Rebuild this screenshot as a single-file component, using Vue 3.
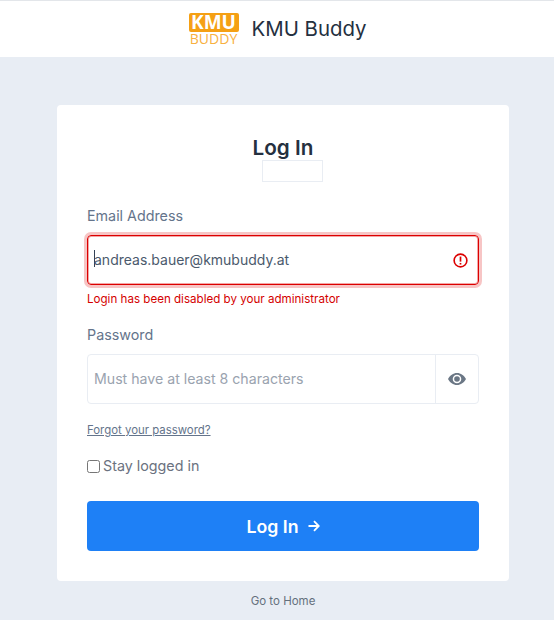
<script setup>
const title = 'KMU Buddy'
</script>

<template>
  <div class="page">
    <header class="top">
      <div class="logo">
        <span class="logo-kmu">KMU</span>
        <span class="logo-buddy">BUDDY</span>
      </div>
      <span class="brand">{{ title }}</span>
    </header>
    <main class="main">
      <section class="card">
        <h1 class="heading">Log In</h1>
        <div class="blank"></div>
        <label class="label first">Email Address</label>
        <div class="input error">
          <i class="caret"></i>
          <span class="value">andreas.bauer@kmubuddy.at</span>
          <svg class="alert" width="15" height="15" viewBox="0 0 16 16" fill="none">
            <circle cx="8" cy="8" r="6.800" stroke="#dc0000" stroke-width="1.700" />
            <path d="M8 3.800V9.200" stroke="#dc0000" stroke-width="1.800" />
            <path d="M8 10.600v1.700" stroke="#dc0000" stroke-width="1.800" />
          </svg>
        </div>
        <p class="msg">Login has been disabled by your administrator</p>
        <label class="label second">Password</label>
        <div class="input group">
          <span class="placeholder">Must have at least 8 characters</span>
          <span class="eye-box">
            <svg width="18" height="12" viewBox="0 0 18 12">
              <path fill="#6b7785" fill-rule="evenodd" d="M9 0C5.200 0 1.900 2.400 0 6c1.900 3.600 5.200 6 9 6s7.100-2.400 9-6c-1.900-3.600-5.200-6-9-6zM9 10.300a4.300 4.300 0 1 1 0-8.600 4.300 4.300 0 0 1 0 8.600z" />
              <circle cx="9" cy="6" r="2.800" fill="#6b7785" />
            </svg>
          </span>
        </div>
        <a class="forgot">Forgot your password?</a>
        <label class="stay">
          <input type="checkbox" class="check" />
          <span>Stay logged in</span>
        </label>
        <button class="submit">
          <span>Log In</span>
          <svg width="12" height="12" viewBox="0 0 12 12" fill="none">
            <path d="M0.500 6h10M6 1.200 10.800 6 6 10.800" stroke="#fff" stroke-width="1.800" />
          </svg>
        </button>
      </section>
      <a class="home">Go to Home</a>
    </main>
  </div>
</template>

<style>
html, body { margin: 0; background: #e8edf4; }
</style>

<style scoped>
.page {
  width: 554px;
  height: 620px;
  overflow: hidden;
  display: flex;
  flex-direction: column;
  font-family: Inter, "Liberation Sans", sans-serif;
  background: #e8edf4;
}
.top {
  height: 56px;
  border-top: 1px solid #e3e6ea;
  background: #fff;
  display: flex;
  align-items: center;
  justify-content: center;
  gap: 13px;
  padding-left: 1px;
  flex: none;
}
.logo {
  width: 50px;
  display: flex;
  flex-direction: column;
  align-items: stretch;
  text-align: center;
  font-family: "Open Sans", sans-serif;
}
.logo-kmu {
  background: #f5a014;
  color: #fff;
  font-weight: 700;
  font-size: 19px;
  line-height: 19px;
  height: 19px;
  border-radius: 2px;
}
.logo-buddy {
  color: #f8b040;
  font-weight: 500;
  font-size: 14px;
  line-height: 12px;
  margin-top: 1px;
}
.brand {
  font-size: 20.400px;
  color: #25303f;
  line-height: 24px;
}
.main {
  flex: 1;
  display: flex;
  flex-direction: column;
  align-items: center;
  padding: 48px 0 0 12px;
}
.card {
  width: 452px;
  height: 476px;
  box-sizing: border-box;
  padding: 30px 30px 30px;
  background: #fff;
  border-radius: 4px;
  display: flex;
  flex-direction: column;
}
.heading {
  margin: 0;
  font-size: 20.700px;
  line-height: 25px;
  font-weight: 600;
  text-align: center;
  color: #25303f;
}
.blank {
  width: 61px;
  height: 22px;
  box-sizing: border-box;
  border: 1px solid #e9edf3;
  align-self: center;
  margin-left: 19px;
}
.label {
  font-size: 14.300px;
  line-height: 20px;
  color: #64748b;
}
.first { margin-top: 24px; }
.second { margin-top: 18px; }
.input {
  margin-top: 9px;
  height: 50px;
  box-sizing: border-box;
  display: flex;
  align-items: center;
  font-size: 14px;
  border-radius: 4px;
  position: relative;
}
.error {
  border: 1px solid #dc0000;
  box-shadow: 0 0 0 3px #f7c5c5, inset 0 0 0 1px rgba(220, 0, 0, 0.35);
  padding: 0 10px 0 6px;
  color: #4b5a6c;
}
.value { flex: 1; position: relative; top: -1px; }
.caret {
  position: absolute;
  left: 6px;
  top: 14px;
  width: 1px;
  height: 17px;
  background: #334155;
}
.msg {
  margin: 6px 0 0;
  font-size: 11.600px;
  line-height: 16px;
  color: #d40000;
}
.group {
  border: 1px solid #e9edf3;
  padding-left: 6px;
  color: #9aa3af;
  font-size: 14.150px;
}
.placeholder { flex: 1; position: relative; top: -1px; }
.eye-box {
  width: 43px;
  height: 100%;
  box-sizing: border-box;
  border-left: 1px solid #e9edf3;
  display: flex;
  align-items: center;
  justify-content: center;
}
.forgot {
  margin-top: 18px;
  font-size: 11.400px;
  line-height: 16px;
  color: #64748b;
  text-decoration: underline;
}
.stay {
  margin-top: 18px;
  display: flex;
  align-items: center;
  gap: 3px;
  font-size: 14.300px;
  line-height: 20px;
  color: #6b7280;
}
.check {
  margin: 0;
  width: 13px;
  height: 13px;
}
.submit {
  margin-top: 25px;
  height: 50px;
  border: 0;
  border-radius: 4px;
  background: #1e80f6;
  color: #fff;
  font: 600 17.700px Inter, "Liberation Sans", sans-serif;
  display: flex;
  align-items: center;
  justify-content: center;
  gap: 9px;
}
.home {
  margin-top: 13px;
  font-size: 11.500px;
  line-height: 14px;
  color: #64707d;
}
</style>
